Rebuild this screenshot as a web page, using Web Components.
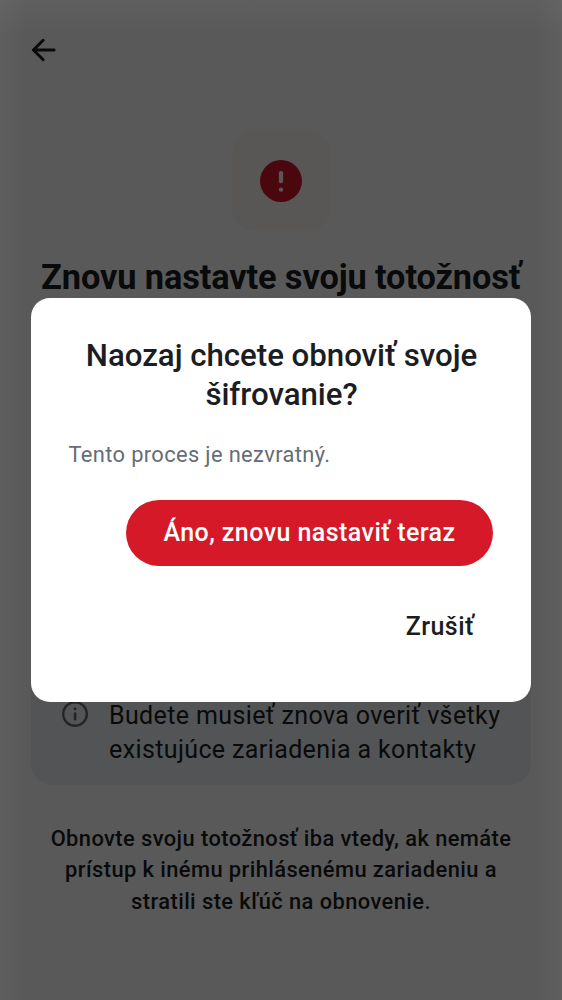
<!DOCTYPE html>
<html lang="sk">
<head>
<meta charset="utf-8">
<title>Obnoviť šifrovanie</title>
<style>
html,body{margin:0;height:100%;overflow:hidden}
body{font-family:Roboto,"Noto Sans",sans-serif;color:#1b1d22;background:#fff}
</style>
</head>
<body>
<reset-app></reset-app>
<script>
const define = (name, html) => customElements.define(name, class extends HTMLElement {
  constructor() {
    super();
    const t = document.createElement('template');
    t.innerHTML = html;
    this.attachShadow({mode: 'open'}).append(t.content.cloneNode(true));
  }
});

define('back-button', `
<style>:host{display:block;height:99px;box-sizing:border-box;padding:34px 0 0 28px}svg{display:block}</style>
<svg width="32" height="32" viewBox="0 0 32 32" fill="none" stroke="#1b1d22" stroke-width="3" stroke-linecap="round" stroke-linejoin="round"><path d="M15.2 6.3 5.4 16l9.8 9.7M5.4 16h20.7"/></svg>`);

define('alert-badge', `
<style>:host{display:flex;align-items:center;justify-content:center;width:99px;height:100px;border-radius:23px;background:#fdf9f3}svg{display:block}</style>
<svg width="42" height="42" viewBox="0 0 42 42"><circle cx="21" cy="21" r="21" fill="#d51928"/><rect x="18.9" y="10.9" width="4.2" height="12.4" rx="1.8" fill="#fdf9f3"/><circle cx="21" cy="29.6" r="2.2" fill="#fdf9f3"/></svg>`);

define('info-note', `
<style>:host{display:flex;box-sizing:border-box;width:500px;height:380px;align-items:flex-end;padding:0 31px 18px;border-radius:22px;background:#ecf0f3;font-size:25px;line-height:34px;letter-spacing:.38px;white-space:nowrap}
svg{display:block;flex:none;margin:0 21px 40px 0}</style>
<svg width="26" height="26" viewBox="0 0 26 26"><circle cx="13" cy="13" r="11.8" fill="none" stroke="#656d77" stroke-width="2.4"/><circle cx="13" cy="7.7" r="1.5" fill="#656d77"/><rect x="11.7" y="11.2" width="2.7" height="8.3" rx="1.3" fill="#656d77"/></svg>
<div><slot></slot></div>`);

define('reset-page', `
<style>:host{display:flex;flex-direction:column;height:1000px}
main{display:flex;flex-direction:column;align-items:center;padding-top:32px}
h1{margin:24px 0 0;font-size:34.375px;line-height:44px;font-weight:700;letter-spacing:-.12px;white-space:nowrap}
info-note{margin-top:106px}
p{margin:38.2px 0 0;text-align:center;font-size:21.875px;line-height:31.25px;font-weight:500;letter-spacing:.42px;white-space:nowrap}</style>
<back-button></back-button>
<main><alert-badge></alert-badge><h1>Znovu nastavte svoju totožnosť</h1>
<info-note>Budete musieť znova overiť všetky<br>existujúce zariadenia a kontakty</info-note>
<p>Obnovte svoju totožnosť iba vtedy, ak nemáte<br>prístup k inému prihlásenému zariadeniu a<br>stratili ste kľúč na obnovenie.</p></main>`);

define('pill-button', `
<style>:host{display:block}
button{display:block;font:500 25px/65.6px Roboto,sans-serif;letter-spacing:.44px;height:65.6px;border:0;border-radius:33px;padding:0 37.5px;color:#fff;background:#d51928;white-space:nowrap}
:host([plain]) button{color:#1b1d22;background:transparent;padding:0 18.75px}</style>
<button type="button"><slot></slot></button>`);

define('confirm-dialog', `
<style>:host{display:flex;flex-direction:column;box-sizing:border-box;width:500px;height:403.4px;padding:37.5px;border-radius:19px;background:#fff}
h2{margin:0 -1px 0 0;text-align:center;font-size:31.25px;line-height:39.06px;font-weight:500;letter-spacing:-.04px;white-space:nowrap}
p{margin:25px 0 30px;font-size:21.875px;line-height:31.25px;letter-spacing:.36px;color:#656d77}
.actions{display:flex;flex-direction:column;align-items:flex-end;gap:28px;padding-right:.5px}</style>
<h2>Naozaj chcete obnoviť svoje<br>šifrovanie?</h2>
<p>Tento proces je nezvratný.</p>
<div class="actions"><pill-button>Áno, znovu nastaviť teraz</pill-button><pill-button plain>Zrušiť</pill-button></div>`);

define('modal-scrim', `
<style>:host{position:absolute;inset:0;display:flex;align-items:center;justify-content:center;
background:linear-gradient(rgba(255,255,255,.035),rgba(255,255,255,0) 36px),linear-gradient(90deg,rgba(255,255,255,.035),rgba(255,255,255,0) 28px,rgba(255,255,255,0) 534px,rgba(255,255,255,.035)),rgba(0,0,0,.65)}</style>
<slot></slot>`);

define('reset-app', `
<style>:host{display:block;position:relative;width:562px;height:1000px;overflow:hidden}</style>
<reset-page></reset-page><modal-scrim><confirm-dialog></confirm-dialog></modal-scrim>`);
</script>
</body>
</html>
